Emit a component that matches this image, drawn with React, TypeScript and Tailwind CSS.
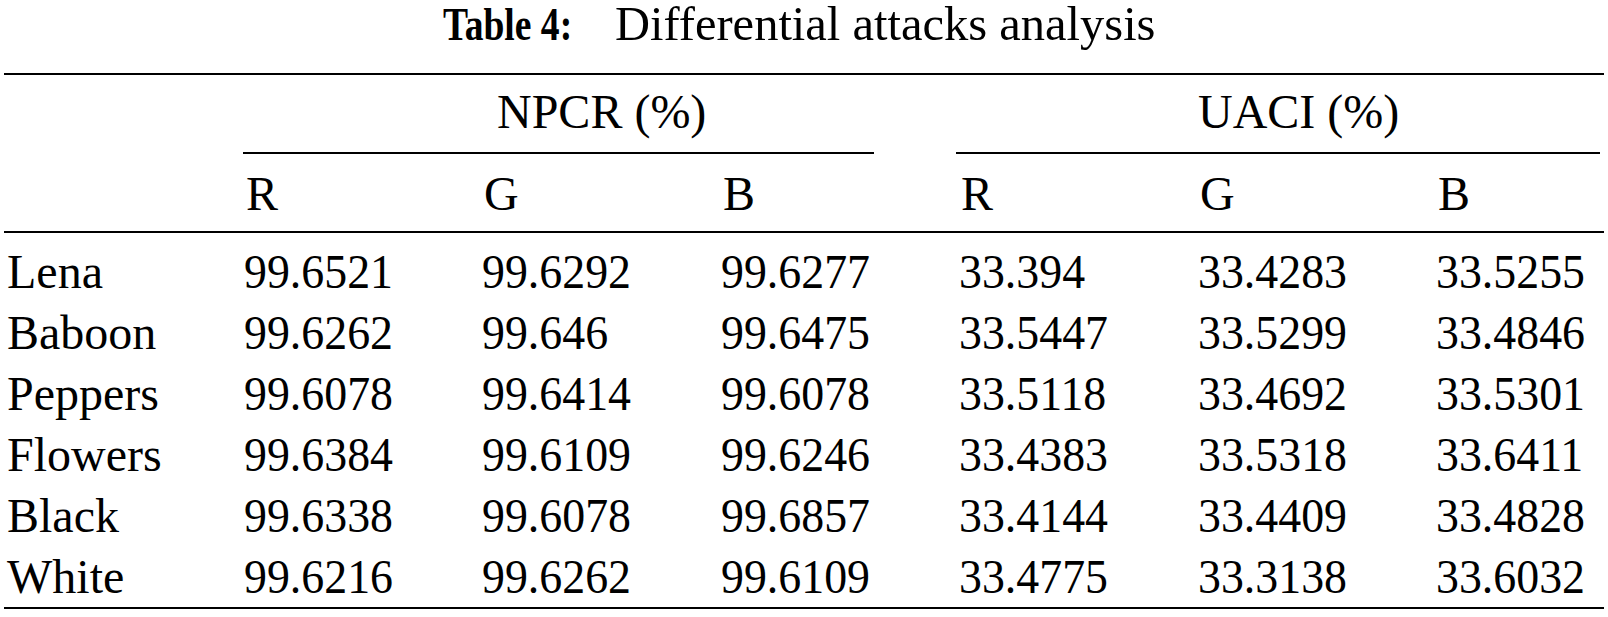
const rgb = ["R", "G", "B"];

const rows = [
  { name: "Lena", values: ["99.6521", "99.6292", "99.6277", "33.394", "33.4283", "33.5255"] },
  { name: "Baboon", values: ["99.6262", "99.646", "99.6475", "33.5447", "33.5299", "33.4846"] },
  { name: "Peppers", values: ["99.6078", "99.6414", "99.6078", "33.5118", "33.4692", "33.5301"] },
  { name: "Flowers", values: ["99.6384", "99.6109", "99.6246", "33.4383", "33.5318", "33.6411"] },
  { name: "Black", values: ["99.6338", "99.6078", "99.6857", "33.4144", "33.4409", "33.4828"] },
  { name: "White", values: ["99.6216", "99.6262", "99.6109", "33.4775", "33.3138", "33.6032"] },
];

const cols = "grid grid-cols-[244px_238px_239px_238px_239px_238px_1fr]";

const App = () => {
  return (
    <div className="w-[1608px] h-[617px] bg-white text-black font-['Liberation_Serif','Times_New_Roman',serif]">
      {/* Caption */}
      <div className="h-[73px] flex items-baseline pl-[443px] leading-[48px] whitespace-nowrap">
        <span className="w-[128px] text-[47px] font-bold">
          <span className="inline-block origin-left scale-x-[0.8]">Table 4:</span>
        </span>
        <span className="ml-[44px] text-[48.5px]">Differential attacks analysis</span>
      </div>

      <div className="mx-[4px] h-[2px] bg-black" />

      <div className="text-[48px]">
        {/* Group headers */}
        <div className={`${cols} h-[77px] leading-[74px]`}>
          <div className="col-start-3 pl-[15px] whitespace-nowrap">NPCR (%)</div>
          <div className="col-start-6 whitespace-nowrap">UACI (%)</div>
        </div>

        <div className="flex">
          <div className="ml-[243px] w-[631px] h-[2px] bg-black" />
          <div className="ml-[82px] w-[644px] h-[2px] bg-black" />
        </div>

        <div className={`${cols} h-[77px] leading-[80px]`}>
          <div />
          {[...rgb, ...rgb].map((c, i) => (
            <div key={i} className="pl-[2px]">
              {c}
            </div>
          ))}
        </div>

        <div className="mx-[4px] h-[2px] bg-black" />

        {/* Data rows */}
        <div className="pt-[8px]">
          {rows.map((row) => (
            <div key={row.name} className={`${cols} h-[61px] leading-[61px]`}>
              <div className="pl-[7px]">{row.name}</div>
              {row.values.map((v, i) => (
                <div key={i} className="whitespace-nowrap">
                  <span className="inline-block origin-left scale-x-[0.955]">{v}</span>
                </div>
              ))}
            </div>
          ))}
        </div>

        <div className="mx-[4px] h-[2px] bg-black" />
      </div>
    </div>
  );
};

export default App;
